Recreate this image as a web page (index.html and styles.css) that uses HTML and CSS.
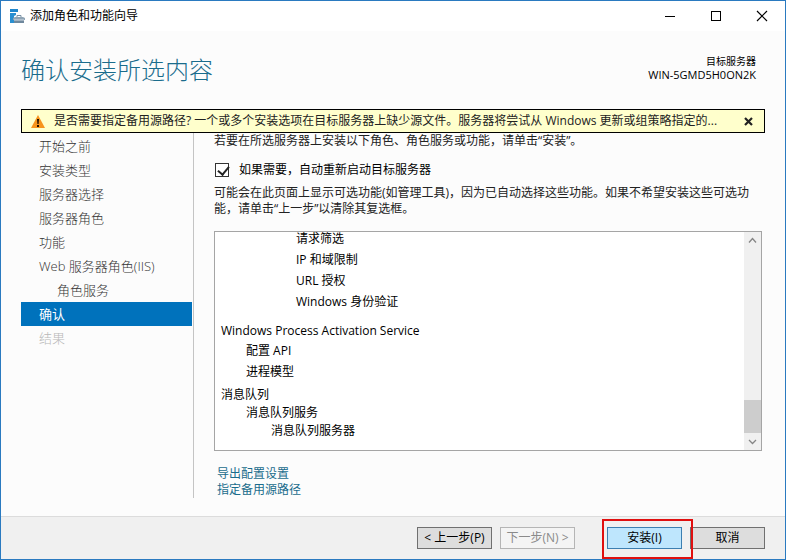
FILE: index.html
```html
<!DOCTYPE html>
<html lang="zh-CN">
<head>
    <meta charset="UTF-8">
    <meta name="viewport" content="width=device-width, initial-scale=1.0">
    <title>添加角色和功能向导</title>
    <link rel="stylesheet" href="styles.css">
</head>
<body>
    <div class="titlebar">
        <svg class="app-icon" width="15" height="15" viewBox="0 0 15 15">
            <path d="M0 0h8v3H0z" fill="#1f86cc"/>
            <path d="M0 4h6v2L4 7v7H0z" fill="#2a8fd0"/>
            <path d="M7 8V6.500h4V8" fill="none" stroke="#7890a4"/>
            <path d="M3 9l2-1h8l2 1v2H3z" fill="#8fa4b5"/>
            <path d="M4 11h10v3H4z" fill="#6f889d"/>
            <path d="M4 11h10" stroke="#d5dee6"/>
        </svg>
        <span class="window-title">添加角色和功能向导</span>
        <div class="window-buttons">
            <button aria-label="最小化"><svg width="12" height="12"><path d="M1 6.500h10" stroke="#000"/></svg></button>
            <button aria-label="最大化"><svg width="12" height="12"><rect x="1.500" y="1.500" width="9" height="9" fill="none" stroke="#000"/></svg></button>
            <button aria-label="关闭"><svg width="12" height="12"><path d="M1 1l10 10M11 1L1 11" stroke="#000" stroke-width="1.200"/></svg></button>
        </div>
    </div>

    <header>
        <h1>确认安装所选内容</h1>
        <div class="target">
            <div>目标服务器</div>
            <div class="server">WIN-5GMD5H0ON2K</div>
        </div>
    </header>

    <div class="warning">
        <svg width="14" height="13" viewBox="0 0 14 13">
            <path d="M7 0l7 13H0z" fill="#f7941d"/>
            <path d="M6 4h2l-.4 5H6.400zM6 10h2v2H6z" fill="#201000"/>
        </svg>
        <p>是否需要指定备用源路径? 一个或多个安装选项在目标服务器上缺少源文件。服务器将尝试从 Windows 更新或组策略指定的...</p>
        <button aria-label="关闭提示"><svg width="9" height="9"><path d="M1 1l7 7M8 1L1 8" stroke="#222" stroke-width="2.200"/></svg></button>
    </div>

    <div class="content">
        <nav>
            <a href="#">开始之前</a>
            <a href="#">安装类型</a>
            <a href="#">服务器选择</a>
            <a href="#">服务器角色</a>
            <a href="#">功能</a>
            <a href="#">Web 服务器角色(IIS)</a>
            <a href="#" class="sub">角色服务</a>
            <a href="#" class="active">确认</a>
            <a class="disabled">结果</a>
        </nav>

        <main>
            <p>若要在所选服务器上安装以下角色、角色服务或功能，请单击“安装”。</p>
            <label class="restart">
                <input type="checkbox" checked>
                如果需要，自动重新启动目标服务器
            </label>
            <p>可能会在此页面上显示可选功能(如管理工具)，因为已自动选择这些功能。如果不希望安装这些可选功能，请单击“上一步”以清除其复选框。</p>

            <div class="listbox">
                <div class="list">
                    <ul class="group">
                        <li class="level3">请求筛选</li>
                        <li class="level3">IP 和域限制</li>
                        <li class="level3">URL 授权</li>
                        <li class="level3">Windows 身份验证</li>
                    </ul>
                    <ul class="group">
                        <li class="root">Windows Process Activation Service</li>
                        <li class="level1">配置 API</li>
                        <li class="level1">进程模型</li>
                    </ul>
                    <ul class="group compact">
                        <li class="root">消息队列</li>
                        <li class="level1">消息队列服务</li>
                        <li class="level2">消息队列服务器</li>
                    </ul>
                </div>
                <div class="scrollbar">
                    <svg width="17" height="17"><path d="M5 10.500l3.500-4 3.500 4" fill="none" stroke="#858585" stroke-width="1.300"/></svg>
                    <div class="thumb"></div>
                    <svg width="17" height="17"><path d="M5 7l3.500 3.500L12 7" fill="none" stroke="#858585" stroke-width="1.300"/></svg>
                </div>
            </div>

            <div class="links">
                <a href="#">导出配置设置</a>
                <a href="#">指定备用源路径</a>
            </div>
        </main>
    </div>

    <footer>
        <button>&lt; 上一步(P)</button>
        <button disabled>下一步(N) &gt;</button>
        <div class="install">
            <button class="primary">安装(I)</button>
        </div>
        <button>取消</button>
    </footer>
</body>
</html>
```
FILE: styles.css
```css
* {
    box-sizing: border-box;
}
body {
    margin: 0;
    min-height: 100vh;
    display: flex;
    flex-direction: column;
    border: 1px solid #2a7ac0;
    background: #fcfcfc;
    color: #222;
    font-family: "Open Sans", "Noto Sans CJK SC", sans-serif;
    font-size: 12px;
    line-height: 16px;
}
h1, p, ul {
    margin: 0;
    padding: 0;
}
button {
    font: inherit;
    color: #000;
    padding: 0;
}
svg {
    display: block;
    flex: none;
}
a {
    text-decoration: none;
}

.titlebar {
    display: flex;
    align-items: center;
    height: 30px;
    padding-left: 9px;
    background: #fff;
    color: #000;
}
.window-title {
    margin-left: 5px;
}
.window-buttons {
    display: flex;
    margin-left: auto;
}
.window-buttons button {
    display: flex;
    align-items: center;
    justify-content: center;
    width: 46px;
    height: 28px;
    border: none;
    background: none;
}

header {
    display: flex;
    justify-content: space-between;
    height: 78px;
    padding: 23px 29px 0 20px;
}
h1 {
    font-size: 24px;
    line-height: 32px;
    font-weight: 300;
    color: #1a6c8c;
}
.target {
    color: #000;
    font-size: 10px;
    line-height: 14px;
    text-align: right;
}
.target .server {
    font-size: 11px;
}

.warning {
    display: flex;
    align-items: center;
    height: 24px;
    margin: 0 20px;
    padding: 0 11px 0 9px;
    border: 1px solid #000;
    background: #ffffcc;
}
.warning p {
    flex: 1;
    margin: 0 16px 0 9px;
    white-space: nowrap;
    overflow: hidden;
    text-overflow: ellipsis;
}
.warning button {
    border: none;
    background: none;
}

.content {
    flex: 1;
    display: flex;
    padding: 0 23px 18px 20px;
}
nav {
    flex: none;
    width: 173px;
    padding: 1px 1px 0 0;
    border-right: 1px solid #c4c4c4;
}
nav a {
    display: block;
    height: 24px;
    padding-left: 18px;
    font-size: 13px;
    font-weight: 300;
    line-height: 24px;
    color: #333;
}
nav a.sub {
    padding-left: 36px;
}
nav a.active {
    background: #0072bc;
    color: #fff;
    font-weight: 400;
}
nav a.disabled {
    color: #b8b8b8;
}

main {
    flex: 1;
    min-width: 0;
    padding-left: 20px;
}
.restart {
    display: flex;
    align-items: center;
    margin: 13px 0 7px;
    color: #000;
}
.restart input {
    appearance: none;
    width: 14px;
    height: 14px;
    margin: 0 10px 0 1px;
    border: 1px solid #333;
    background: #fff;
}
.restart input:checked::before {
    content: "";
    display: block;
    width: 5px;
    height: 9px;
    margin-left: 4px;
    border: solid #222;
    border-width: 0 2px 2px 0;
    transform: rotate(40deg);
}

.listbox {
    display: flex;
    height: 220px;
    margin-top: 14px;
    border: 1px solid #a5a5a5;
    background: #fff;
    color: #000;
}
.list {
    flex: 1;
    display: flex;
    flex-direction: column;
    justify-content: flex-end;
    overflow: hidden;
    padding: 0 6px 10px;
}
.group {
    list-style: none;
    margin-bottom: 10px;
}
.group:nth-child(2) {
    margin-bottom: 4px;
}
.group:last-child {
    margin-bottom: 0;
}
.group li {
    line-height: 21px;
}
.group li.root,
.compact li {
    line-height: 18px;
}
.group .level1 {
    padding-left: 25px;
}
.group .level2 {
    padding-left: 50px;
}
.group .level3 {
    padding-left: 75px;
}
.scrollbar {
    display: flex;
    flex-direction: column;
    width: 17px;
    background: #f0f0f0;
}
.thumb {
    height: 33px;
    margin-top: auto;
    background: #cdcdcd;
}

.links {
    display: flex;
    flex-direction: column;
    align-items: flex-start;
    margin: 15px 0 0 3px;
}
.links a {
    color: #1a6c8c;
}

footer {
    display: flex;
    justify-content: flex-end;
    align-items: center;
    gap: 8px;
    height: 43px;
    padding-right: 20px;
    border-top: 1px solid #dcdcdc;
    background: #f0f0f0;
}
footer button {
    width: 75px;
    height: 22px;
    border: 1px solid #707070;
    background: #dddddd;
    line-height: 20px;
}
footer button:disabled {
    border-color: #b5b5b5;
    background: #f4f4f4;
    color: #8a8a8a;
}
footer .primary {
    border-color: #3c7fb1;
    background: #bee6fd;
}
.install {
    position: relative;
    margin-left: 24px;
}
/* red highlight around the install button */
.install::after {
    content: "";
    position: absolute;
    inset: -8px -11px -10px -5px;
    border: 2px solid #e01010;
    pointer-events: none;
}
```
